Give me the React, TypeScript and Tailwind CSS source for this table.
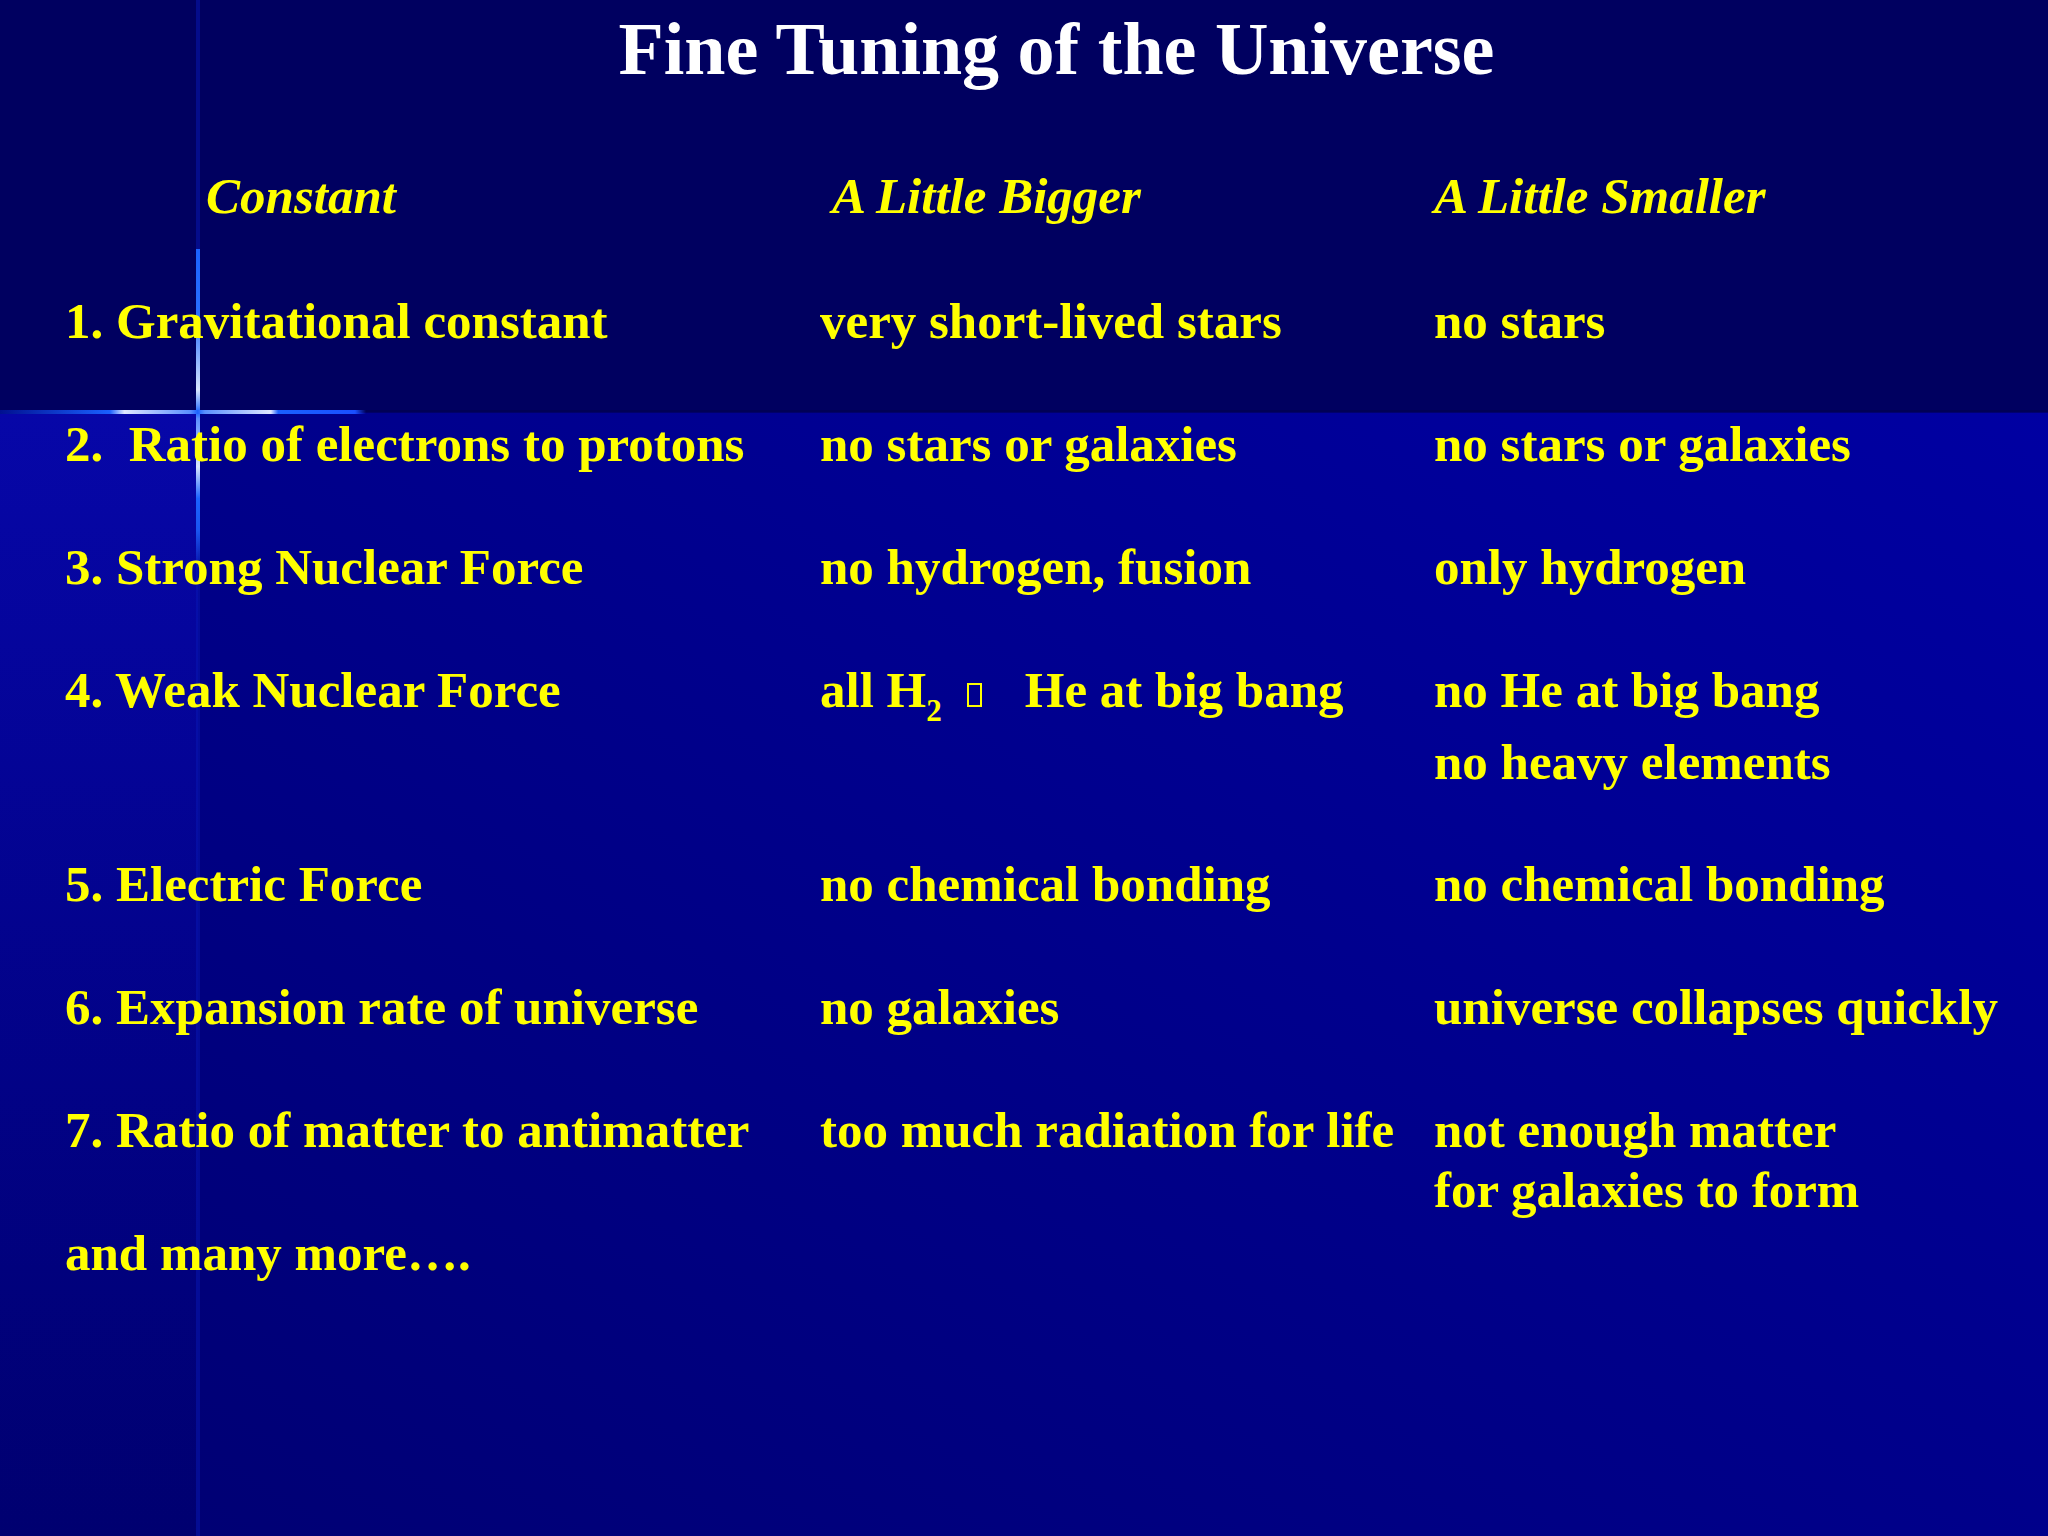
import React from "react";

type Row = {
  label: string;
  bigger: React.ReactNode;
  smaller: React.ReactNode;
  height: string;
};

const Box = () => (
  <span className="inline-block w-[15px] h-[24px] border-2 border-[#ffff00] align-[0px] ml-[25px] mr-[43px]" />
);

const rows: Row[] = [
  {
    label: "1. Gravitational constant",
    bigger: "very short-lived stars",
    smaller: "no stars",
    height: "h-[123px]",
  },
  {
    label: "2.  Ratio of electrons to protons",
    bigger: "no stars or galaxies",
    smaller: "no stars or galaxies",
    height: "h-[123px]",
  },
  {
    label: "3. Strong Nuclear Force",
    bigger: "no hydrogen, fusion",
    smaller: "only hydrogen",
    height: "h-[123px]",
  },
  {
    label: "4. Weak Nuclear Force",
    bigger: (
      <>
        all H<span className="text-[31px] leading-none align-[-14px]">2</span>
        <Box />
        He at big bang
      </>
    ),
    smaller: (
      <>
        <div>no He at big bang</div>
        <div className="mt-[12px]">no heavy elements</div>
      </>
    ),
    height: "h-[194px]",
  },
  {
    label: "5. Electric Force",
    bigger: "no chemical bonding",
    smaller: "no chemical bonding",
    height: "h-[123px]",
  },
  {
    label: "6. Expansion rate of universe",
    bigger: "no galaxies",
    smaller: "universe collapses quickly",
    height: "h-[123px]",
  },
  {
    label: "7. Ratio of matter to antimatter",
    bigger: "too much radiation for life",
    smaller: (
      <>
        <div>not enough matter</div>
        <div>for galaxies to form</div>
      </>
    ),
    height: "h-[123px]",
  },
];

export default function App() {
  return (
    <div className="relative w-[2048px] h-[1536px] overflow-hidden bg-[#000060] font-['Liberation_Serif','Times_New_Roman',serif]">
      {/* background: slide template blocks and cross */}
      <div className="absolute left-0 right-0 top-0 h-[412px] bg-[#000060]" />
      <div className="absolute left-[198px] right-0 top-[412px] bottom-0 bg-linear-to-tr from-[#000074] to-[#0000a2]" />
      <div className="absolute left-0 w-[198px] top-[412px] bottom-0 bg-linear-to-b from-[#0707a8] to-[#000070]" />
      <div className="absolute left-0 right-0 top-[410px] h-[3px] bg-[#00004e]/60" />
      <div className="absolute left-[196px] w-[4px] top-0 bottom-0 bg-[#0818b4]/50" />
      <div className="absolute left-[196px] w-[4px] top-[249px] h-[320px] bg-[linear-gradient(to_bottom,#1a62ff_0%,#2a70ff_22%,#d8e6ff_44%,#5a90ff_49%,#1a62ff_51%,#5a90ff_53%,#d8e6ff_68%,#1a62ff_78%,#1a55f0_88%,transparent_100%)]" />
      <div className="absolute left-0 w-[366px] top-[410px] h-[4px] bg-[linear-gradient(to_right,#001090_0%,#1a60ff_30%,#dfe8ff_34%,#5a90ff_52%,#1a62ff_54%,#5a90ff_56%,#dfe8ff_74%,#1a60ff_76%,#1a50ff_97%,transparent_100%)]" />

      {/* content */}
      <div className="relative flex flex-col">
        <h1 className="pl-[65px] pt-[5px] text-center text-[74px] leading-[88px] font-bold text-white">
          Fine Tuning of the Universe
        </h1>

        <div className="mt-[73px] pl-[65px] text-[51px] leading-[60px] font-bold text-[#ffff00] whitespace-pre">
          <div className="grid grid-cols-[755px_614px_1fr] h-[125px] italic">
            <div className="pl-[141px]">Constant</div>
            <div className="pl-[12px]">A Little Bigger</div>
            <div>A Little Smaller</div>
          </div>

          {rows.map((r) => (
            <div key={r.label} className={`grid grid-cols-[755px_614px_1fr] ${r.height}`}>
              <div>{r.label}</div>
              <div>{r.bigger}</div>
              <div>{r.smaller}</div>
            </div>
          ))}

          <div>and many more….</div>
        </div>
      </div>
    </div>
  );
}
